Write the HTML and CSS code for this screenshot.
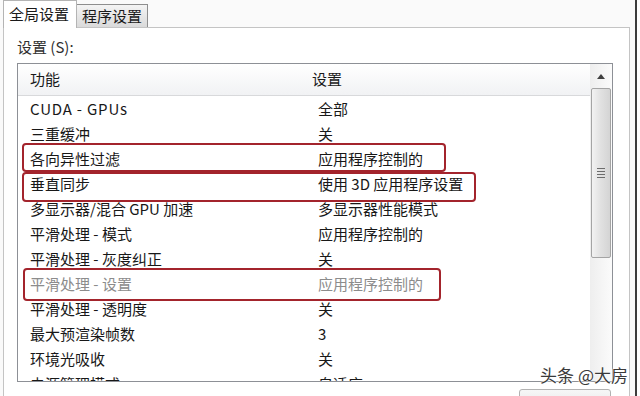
FILE: index.html
```html
<!DOCTYPE html>
<html lang="zh-CN">
    <head>
        <meta charset="utf-8">
        <title>全局设置</title>
        <link rel="stylesheet" href="styles.css">
    </head>
    <body>
        <div class="window">
            <div class="tabs">
                <div class="tab tab-active">全局设置</div>
                <div class="tab">程序设置</div>
            </div>

            <div class="panel">
                <div class="label">设置 (S):</div>

                <div class="list">
                    <div class="rows">
                        <div class="row row-head">
                            <span>功能</span>
                            <span class="head-value">设置</span>
                        </div>
                        <div class="row"><span class="latin">CUDA - GPUs</span><span>全部</span></div>
                        <div class="row"><span>三重缓冲</span><span>关</span></div>
                        <div class="row"><span>各向异性过滤</span><span>应用程序控制的</span></div>
                        <div class="row"><span>垂直同步</span><span>使用 3D 应用程序设置</span></div>
                        <div class="row"><span>多显示器/混合 GPU 加速</span><span>多显示器性能模式</span></div>
                        <div class="row"><span>平滑处理 - 模式</span><span>应用程序控制的</span></div>
                        <div class="row"><span>平滑处理 - 灰度纠正</span><span>关</span></div>
                        <div class="row row-disabled"><span>平滑处理 - 设置</span><span>应用程序控制的</span></div>
                        <div class="row"><span>平滑处理 - 透明度</span><span>关</span></div>
                        <div class="row"><span>最大预渲染帧数</span><span>3</span></div>
                        <div class="row"><span>环境光吸收</span><span>关</span></div>
                        <div class="row"><span>电源管理模式</span><span>自适应</span></div>

                        <!-- red marks drawn over the screenshot -->
                        <span class="mark mark-aniso"></span>
                        <span class="mark mark-vsync"></span>
                        <span class="mark mark-aa"></span>
                    </div>

                    <div class="scrollbar">
                        <div class="scroll-up">
                            <svg width="8" height="5" viewBox="0 0 8 5"><path d="M0 5 L4 0 L8 5 Z" fill="#404040"/></svg>
                        </div>
                        <div class="thumb">
                            <span class="grip"></span>
                            <span class="grip"></span>
                            <span class="grip"></span>
                            <span class="grip"></span>
                        </div>
                    </div>
                </div>

                <div class="footer">
                    <div class="button"></div>
                </div>
            </div>

            <div class="watermark">头条 @大房</div>
        </div>
    </body>
</html>
```

FILE: styles.css
```css
* {
    margin: 0;
    padding: 0;
    box-sizing: border-box;
}
html, body {
    width: 640px;
    height: 396px;
    overflow: hidden;
    background-color: #ffffff;
}
body {
    font-family: "Noto Sans CJK SC", "Liberation Sans", sans-serif;
    font-size: 15px;
    color: #181818;
}

.window {
    position: relative;
    width: 637px;
    height: 396px;
    border-right: 2px solid #3c3c3c;
    padding-right: 5px;
    background-color: #fafafa;
}

/* tabs */
.tabs {
    display: flex;
    align-items: flex-end;
    height: 27px;
    padding-left: 3px;
}
.tab {
    height: 23px;
    width: 71px;
    padding-left: 5px;
    line-height: 21px;
    border: 1px solid #8e8e8e;
    border-bottom: none;
    border-left: none;
    background: linear-gradient(#f4f4f4, #dadada);
    color: #1a1a1a;
}
.tab-active {
    height: 28px;
    width: 74px;
    margin-bottom: -1px;
    line-height: 26px;
    border: 1px solid #b4b4b4;
    border-bottom: none;
    background: #ffffff;
    position: relative;
    z-index: 1;
}

/* panel */
.panel {
    margin-left: 3px;
    height: 369px;
    border: 1px solid #c4c4c4;
    border-bottom: none;
    background-color: #ffffff;
    padding: 9px 16px 0 13px;
}
.label {
    height: 26px;
    line-height: 20px;
    color: #303030;
}

.list {
    display: flex;
    height: 319px;
    border: 1px solid #8d9096;
    background-color: #ffffff;
}
.rows {
    position: relative;
    flex: 1;
    overflow: hidden;
}
.row {
    display: grid;
    grid-template-columns: 288px 1fr;
    height: 25px;
    line-height: 25px;
    padding-left: 12px;
    white-space: nowrap;
}
.latin {
    letter-spacing: 0.8px;
}
.row-head {
    height: 32px;
    line-height: 30px;
    background: linear-gradient(#ffffff, #f1f2f4);
    border-bottom: 1px solid #d8d9db;
    color: #1a1a1a;
}
.head-value {
    margin-left: -6px;
}
.row-disabled {
    color: #8c8c8c;
}

.mark {
    position: absolute;
    border: 2px solid #a3242c;
    border-radius: 4px;
}
.mark-aniso {
    left: 4px;
    top: 79px;
    width: 424px;
    height: 29px;
}
.mark-vsync {
    left: 4px;
    top: 108px;
    width: 454px;
    height: 30px;
}
.mark-aa {
    left: 5px;
    top: 204px;
    width: 418px;
    height: 33px;
}

/* scrollbar */
.scrollbar {
    width: 22px;
    display: flex;
    flex-direction: column;
    background: linear-gradient(90deg, #eeeeee, #fbfbfb);
    padding: 0 1px;
}
.scroll-up {
    height: 24px;
    display: flex;
    align-items: center;
    justify-content: center;
}
.thumb {
    height: 170px;
    border: 1px solid #a4a4a4;
    border-radius: 2px;
    background: linear-gradient(90deg, #f2f2f2, #e2e2e2 45%, #d4d4d4);
    display: flex;
    flex-direction: column;
    align-items: center;
    justify-content: center;
    gap: 2px;
}
.grip {
    width: 8px;
    height: 1px;
    background-color: #6c6c6c;
}

.footer {
    display: flex;
    justify-content: flex-end;
    padding-top: 7px;
    padding-right: 2px;
}
.button {
    width: 92px;
    height: 24px;
    border: 1px solid #b2b2b2;
    border-radius: 3px;
    background: linear-gradient(#f6f6f6, #e6e6e6);
}

.watermark {
    position: absolute;
    right: 7px;
    bottom: 11px;
    font-size: 17px;
    line-height: 20px;
    color: #3a3a3a;
    text-shadow: 0 0 2px #ffffff, 0 0 2px #ffffff, 0 0 1px #ffffff;
}
```
